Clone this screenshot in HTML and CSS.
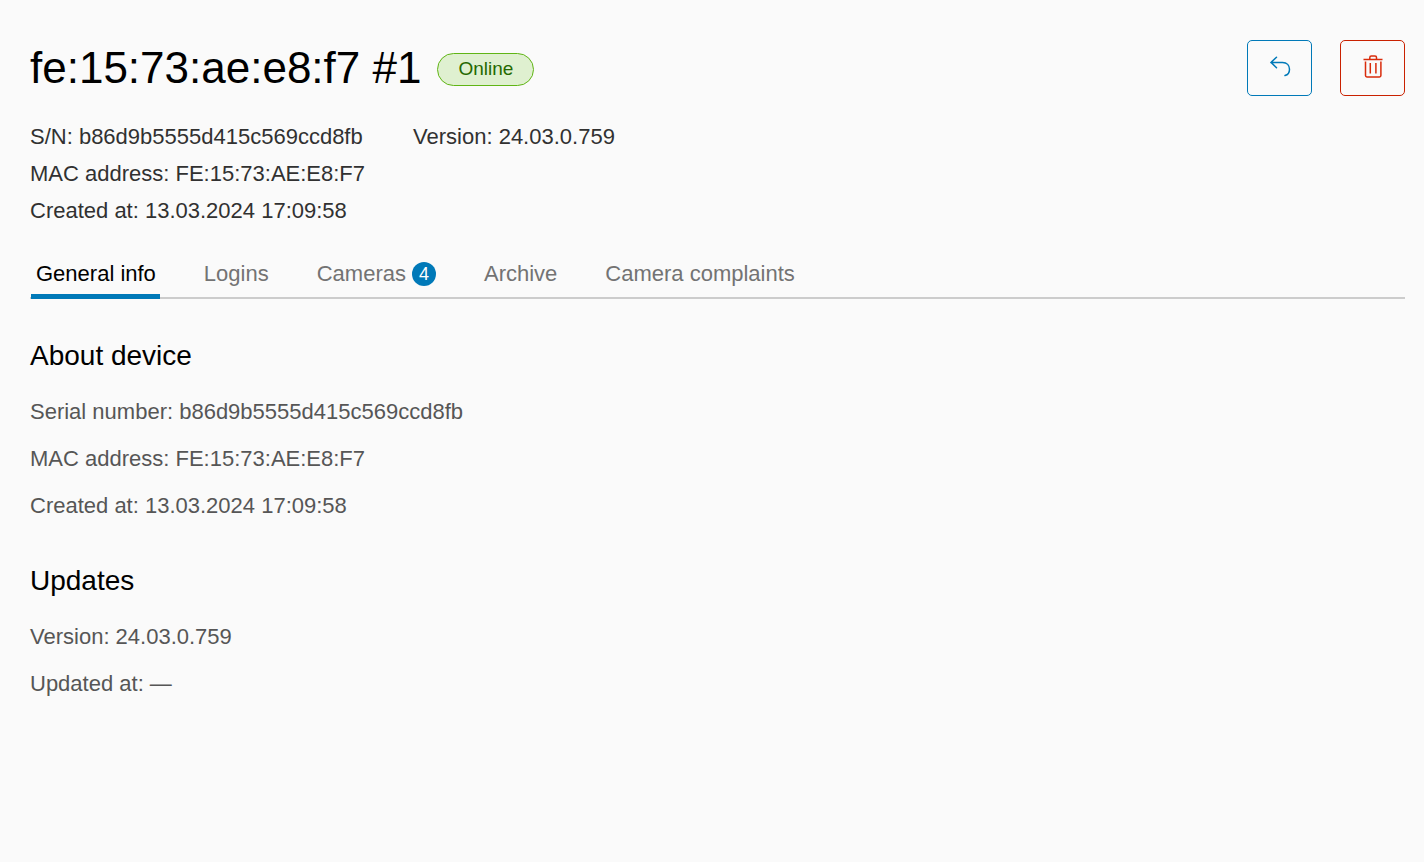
FILE: index.html
```html
<!DOCTYPE html>
<html lang="en">
<head>
    <meta charset="utf-8">
    <title>fe:15:73:ae:e8:f7 #1</title>
    <link rel="stylesheet" href="styles.css">
</head>
<body>
    <header class="page-header">
        <h1>fe:15:73:ae:e8:f7 #1</h1>
        <span class="status">Online</span>
        <div class="actions">
            <button class="btn" type="button" aria-label="Back">
                <svg width="24" height="24" viewBox="0 0 24 24" fill="none" stroke="currentColor" stroke-width="1.5" stroke-linecap="round">
                    <path d="M8.5 1.2L3 6.4l5.500 5.300M3 6.400H14.500C19 6.400 21.500 9.500 21.500 13.300C21.500 16.800 19.500 19 17 19.600"/>
                </svg>
            </button>
            <button class="btn btn-danger" type="button" aria-label="Delete">
                <svg width="24" height="26" viewBox="0 0 24 26" fill="none" stroke="currentColor" stroke-width="1.5">
                    <path d="M2.500 4.500h19M8.800 4.500V2.500q0-1.500 1.500-1.500h3.700q1.500 0 1.500 1.500v2M4.500 6.500v14q0 1.400 1.400 1.400h12.600q1.400 0 1.400-1.400v-14M9.300 8v10.500M14.900 8v10.500"/>
                </svg>
            </button>
        </div>
    </header>

    <div class="summary">
        <div class="summary-col">
            <p>S/N: b86d9b5555d415c569ccd8fb</p>
            <p>MAC address: FE:15:73:AE:E8:F7</p>
            <p>Created at: 13.03.2024 17:09:58</p>
        </div>
        <div class="summary-col">
            <p>Version: 24.03.0.759</p>
        </div>
    </div>

    <nav class="tabs">
        <button class="tab active" type="button">General info</button>
        <button class="tab" type="button">Logins</button>
        <button class="tab" type="button">Cameras <span class="count">4</span></button>
        <button class="tab" type="button">Archive</button>
        <button class="tab" type="button">Camera complaints</button>
    </nav>

    <section class="info">
        <h2>About device</h2>
        <p>Serial number: b86d9b5555d415c569ccd8fb</p>
        <p>MAC address: FE:15:73:AE:E8:F7</p>
        <p>Created at: 13.03.2024 17:09:58</p>
    </section>

    <section class="info">
        <h2>Updates</h2>
        <p>Version: 24.03.0.759</p>
        <p>Updated at: —</p>
    </section>
</body>
</html>
```
FILE: styles.css
```css
body {
    margin: 0;
    padding: 40px 19px 40px 30px;
    background: #fafafa;
    color: #313131;
    font-family: "Liberation Sans", Arial, sans-serif;
    font-size: 22px;
}

h1, h2, p {
    margin: 0;
    font-weight: normal;
}

.page-header {
    display: flex;
    align-items: center;
}

h1 {
    color: #000;
    font-size: 44px;
    line-height: 56px;
}

.status {
    box-sizing: border-box;
    height: 33px;
    margin: 2px 0 0 16px;
    padding: 0 20px;
    border: 1px solid #60b515;
    border-radius: 17px;
    background: #dff0d0;
    color: #266900;
    font-size: 19px;
    line-height: 30px;
}

.actions {
    display: flex;
    gap: 28px;
    margin-left: auto;
}

.btn {
    display: flex;
    align-items: center;
    justify-content: center;
    width: 65px;
    height: 56px;
    padding: 0;
    border: 1px solid #0079b8;
    border-radius: 5px;
    background: transparent;
    color: #0079b8;
    cursor: pointer;
}

.btn-danger {
    border-color: #c92100;
    color: #d92b0b;
}

.summary {
    display: flex;
    gap: 48px;
    padding-top: 22px;
    line-height: 37px;
}

.tabs {
    display: flex;
    gap: 39px;
    margin-top: 19px;
    padding-left: 1px;
    box-shadow: inset 0 -2px 0 #ccc;
}

.tab {
    display: flex;
    align-items: center;
    gap: 6px;
    height: 51px;
    padding: 0 4px 0 5px;
    border: 0;
    background: transparent;
    color: #737373;
    font: inherit;
    cursor: pointer;
}

.tab.active {
    color: #000;
    box-shadow: inset 0 -5px 0 #0079b8;
}

.count {
    width: 24px;
    height: 24px;
    margin-top: 1px;
    border-radius: 12px;
    background: #0079b8;
    color: #fff;
    font-size: 18px;
    line-height: 24px;
}

.info {
    padding-top: 36px;
    color: #565656;
}

.info + .info {
    margin-top: 6px;
}

.info h2 {
    color: #000;
    font-size: 28px;
    line-height: 42px;
}

.info p {
    margin-top: 23px;
    line-height: 24px;
}
```
